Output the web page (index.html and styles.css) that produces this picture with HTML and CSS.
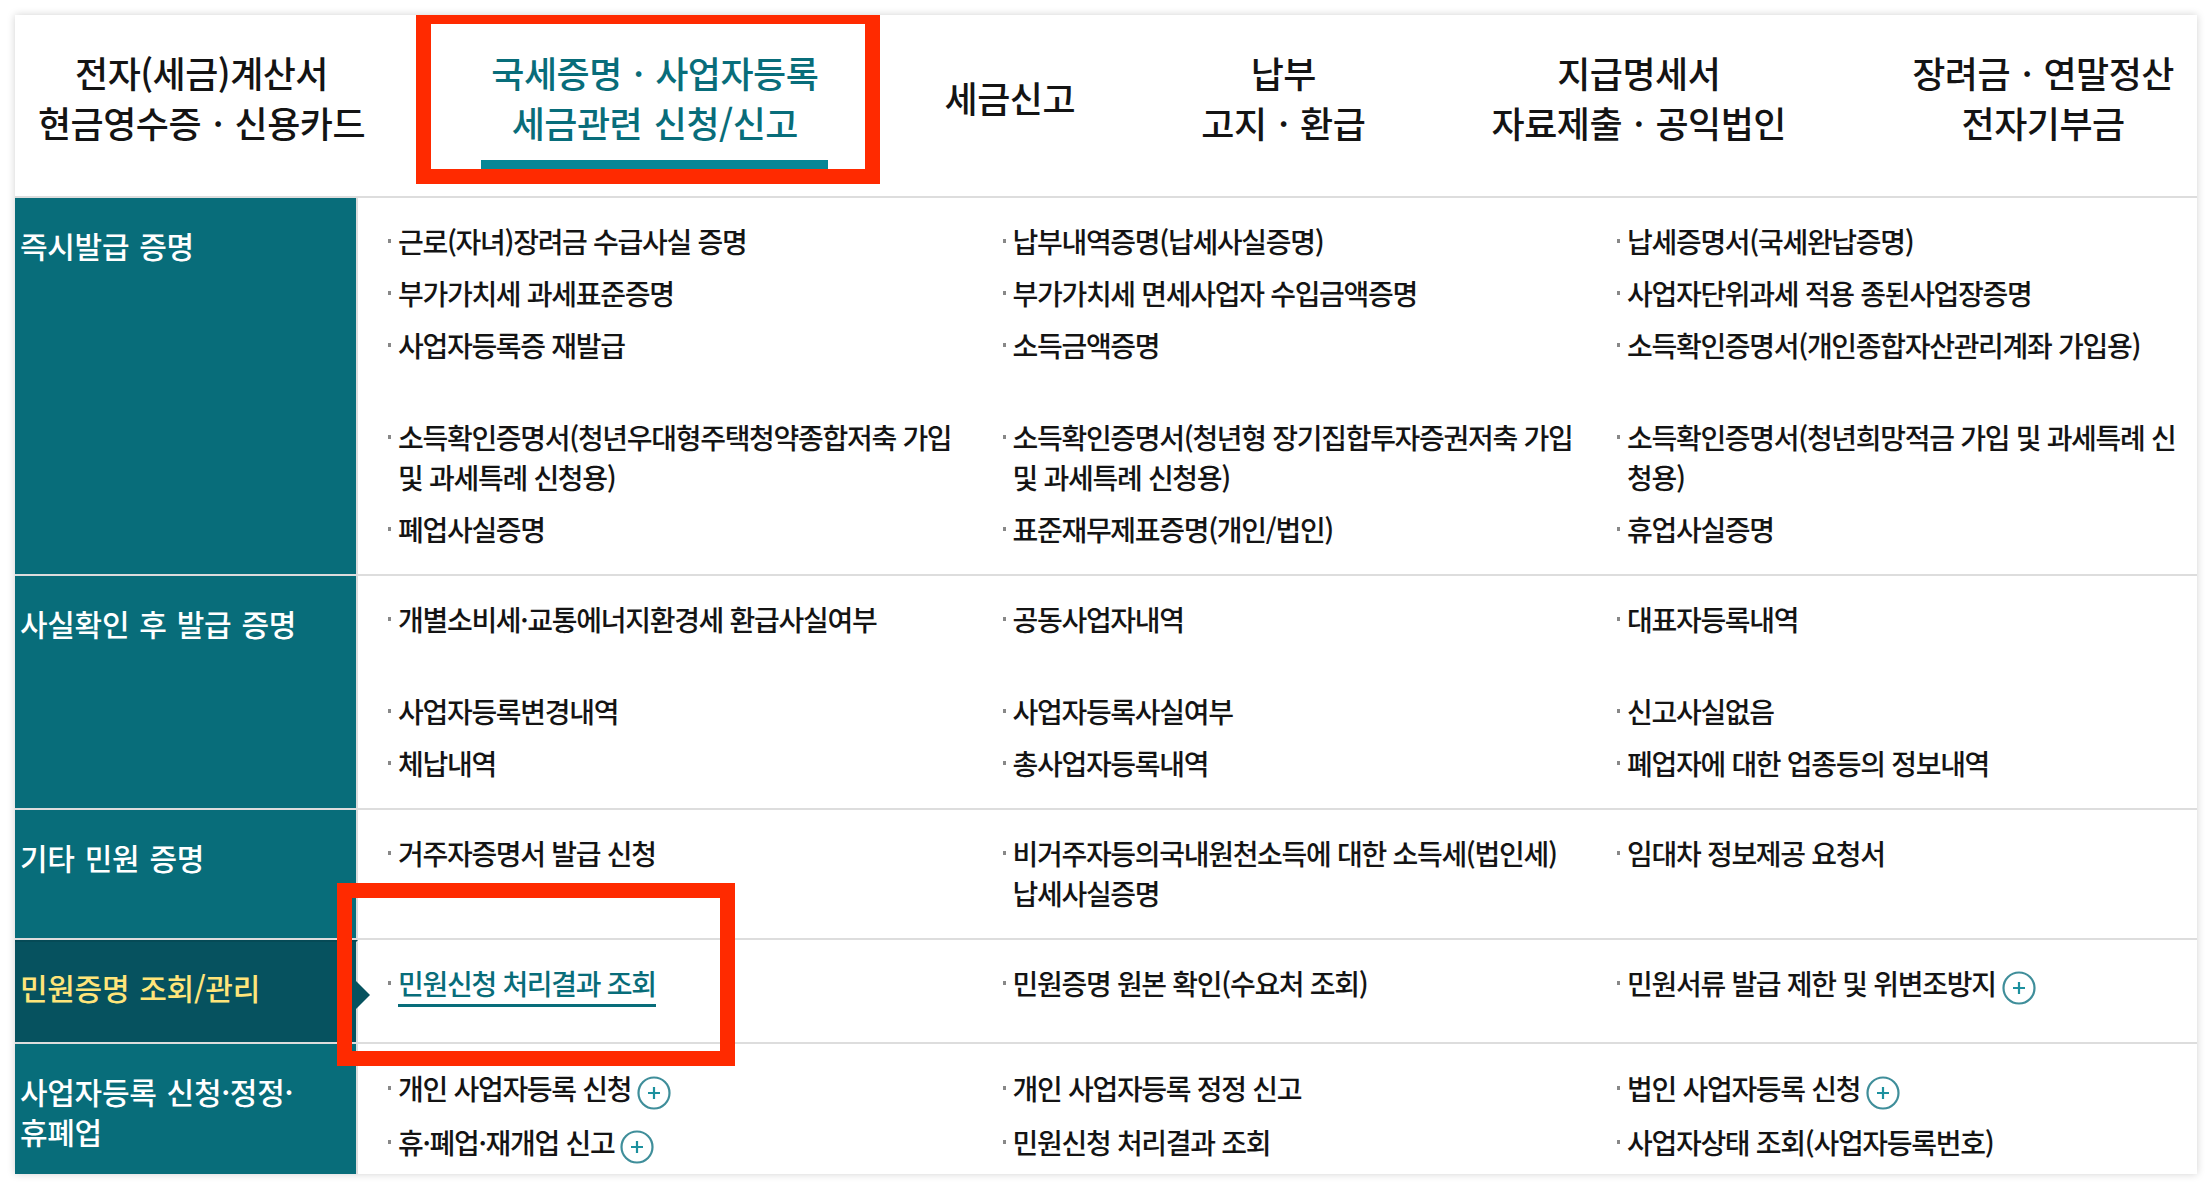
FILE: index.html
```html
<!DOCTYPE html>
<html lang="ko">
<head>
<meta charset="utf-8">
<title>국세증명 · 사업자등록</title>
<link rel="stylesheet" href="styles.css">
</head>
<body>
<main class="panel">
  <nav class="tabs">
    <a class="tab">전자(세금)계산서<br>현금영수증 · 신용카드</a>
    <a class="tab tab-active">국세증명 · 사업자등록<br>세금관련 신청/신고</a>
    <a class="tab">세금신고</a>
    <a class="tab">납부<br>고지 · 환급</a>
    <a class="tab">지급명세서<br>자료제출 · 공익법인</a>
    <a class="tab">장려금 · 연말정산<br>전자기부금</a>
  </nav>

  <section class="row row-first">
    <h3 class="label">즉시발급 증명</h3>
    <div class="cell">
      <ul class="items">
        <li>근로(자녀)장려금 수급사실 증명</li>
        <li>납부내역증명(납세사실증명)</li>
        <li>납세증명서(국세완납증명)</li>
        <li>부가가치세 과세표준증명</li>
        <li>부가가치세 면세사업자 수입금액증명</li>
        <li>사업자단위과세 적용 종된사업장증명</li>
        <li>사업자등록증 재발급</li>
        <li>소득금액증명</li>
        <li>소득확인증명서(개인종합자산관리계좌 가입용)</li>
      </ul>
      <ul class="items">
        <li>소득확인증명서(청년우대형주택청약종합저축 가입 및 과세특례 신청용)</li>
        <li>소득확인증명서(청년형 장기집합투자증권저축 가입 및 과세특례 신청용)</li>
        <li>소득확인증명서(청년희망적금 가입 및 과세특례 신청용)</li>
        <li>폐업사실증명</li>
        <li>표준재무제표증명(개인/법인)</li>
        <li>휴업사실증명</li>
      </ul>
    </div>
  </section>

  <section class="row">
    <h3 class="label">사실확인 후 발급 증명</h3>
    <div class="cell">
      <ul class="items">
        <li>개별소비세·교통에너지환경세 환급사실여부</li>
        <li>공동사업자내역</li>
        <li>대표자등록내역</li>
      </ul>
      <ul class="items">
        <li>사업자등록변경내역</li>
        <li>사업자등록사실여부</li>
        <li>신고사실없음</li>
        <li>체납내역</li>
        <li>총사업자등록내역</li>
        <li>폐업자에 대한 업종등의 정보내역</li>
      </ul>
    </div>
  </section>

  <section class="row">
    <h3 class="label">기타 민원 증명</h3>
    <div class="cell">
      <ul class="items">
        <li>거주자증명서 발급 신청</li>
        <li>비거주자등의국내원천소득에 대한 소득세(법인세) 납세사실증명</li>
        <li>임대차 정보제공 요청서</li>
      </ul>
    </div>
  </section>

  <section class="row row-active">
    <h3 class="label label-active">민원증명 조회/관리</h3>
    <div class="cell cell-roomy">
      <ul class="items">
        <li><a class="link-active">민원신청 처리결과 조회</a></li>
        <li>민원증명 원본 확인(수요처 조회)</li>
        <li>민원서류 발급 제한 및 위변조방지<svg class="plus" viewBox="0 0 34 34"><circle cx="17" cy="17" r="15.5"/><path class="plus-mark" d="M17 11v12M11 17h12"/></svg></li>
      </ul>
    </div>
  </section>

  <section class="row row-last">
    <h3 class="label">사업자등록 신청·정정·<br>휴폐업</h3>
    <div class="cell cell-tight">
      <ul class="items">
        <li>개인 사업자등록 신청<svg class="plus" viewBox="0 0 34 34"><circle cx="17" cy="17" r="15.5"/><path class="plus-mark" d="M17 11v12M11 17h12"/></svg></li>
        <li>개인 사업자등록 정정 신고</li>
        <li>법인 사업자등록 신청<svg class="plus" viewBox="0 0 34 34"><circle cx="17" cy="17" r="15.5"/><path class="plus-mark" d="M17 11v12M11 17h12"/></svg></li>
        <li>휴·폐업·재개업 신고<svg class="plus" viewBox="0 0 34 34"><circle cx="17" cy="17" r="15.5"/><path class="plus-mark" d="M17 11v12M11 17h12"/></svg></li>
        <li>민원신청 처리결과 조회</li>
        <li>사업자상태 조회(사업자등록번호)</li>
      </ul>
    </div>
  </section>

  <div class="mark mark-tab"></div>
  <div class="mark mark-link"></div>
</main>
</body>
</html>
```
FILE: styles.css
```css
* { box-sizing: border-box; }
html, body { margin: 0; padding: 0; background: #fff; }
body {
  padding: 15px 15px 15px;
  font-family: "Noto Sans CJK KR", "Noto Sans", sans-serif;
  color: #141414;
}
ul, h3 { margin: 0; padding: 0; list-style: none; }

.panel {
  position: relative;
  width: 2182px;
  background: #fff;
  box-shadow: 0 0 8px rgba(0, 0, 0, .18);
}

.tabs {
  display: flex;
  justify-content: space-between;
  height: 183px;
  padding: 32px 13px 0;
  border-bottom: 2px solid #ddd;
}
.tab {
  display: flex;
  align-items: center;
  height: 100px;
  padding: 0 10px;
  text-align: center;
  font-size: 36px;
  line-height: 50px;
  font-weight: 500;
  letter-spacing: -.5px;
  word-spacing: 2px;
  position: relative;
}
.tab-active { color: #086d7a; }
.tab-active::after {
  content: "";
  position: absolute;
  left: 0;
  right: 0;
  top: 113px;
  height: 10px;
  background: #078796;
}

.row {
  display: grid;
  grid-template-columns: 343px 1fr;
  border-bottom: 2px solid #ddd;
}
.row-last { border-bottom: 0; }

.label {
  padding: 27px 5px 0;
  background: #086d7a;
  background-clip: padding-box;
  border-right: 2px solid #ddd;
  color: #fff;
  font-size: 30px;
  line-height: 40px;
  font-weight: 500;
  letter-spacing: -.3px;
  word-spacing: 2px;
}
.label-active {
  position: relative;
  background: #06525f;
  background-clip: padding-box;
  color: #ffe57a;
  border-top: 2px solid #054a56;
  padding-top: 25px;
}
.label-active::after {
  content: "";
  position: absolute;
  left: 100%;
  top: 39px;
  border-left: 14px solid #06525f;
  border-top: 14px solid transparent;
  border-bottom: 14px solid transparent;
}

.cell { padding: 23px 0 25px 30px; }
.cell-roomy { padding: 23px 0 39px 30px; }
.cell-tight { padding: 24px 0 12px 30px; }
.row-last .items { row-gap: 14px; }

.items {
  display: grid;
  grid-template-columns: repeat(3, 580px);
  column-gap: 34.5px;
  row-gap: 12px;
}
.items + .items { margin-top: 52px; }
.items li {
  position: relative;
  padding-left: 10px;
  font-size: 28px;
  line-height: 40px;
  font-weight: 500;
  letter-spacing: -1.3px;
}
.items li::before {
  content: "";
  position: absolute;
  left: 0;
  top: 18px;
  width: 3px;
  height: 4px;
  background: #888;
}

.link-active {
  color: #086d7a;
  border-bottom: 3px solid #086d7a;
  padding-bottom: 1px;
}

.plus {
  width: 34px;
  height: 34px;
  margin: -6px 0 -6px 6px;
  vertical-align: -4px;
  fill: none;
  stroke: #3f8e9a;
  stroke-width: 2.2;
}
.plus-mark { stroke: #1c909e; }

.mark { position: absolute; border-style: solid; border-color: #ff2a00; pointer-events: none; }
.mark-tab { left: 401px; top: 0; width: 464px; height: 169px; border-width: 9px 15px 15px; }
.mark-link { left: 322px; top: 868px; width: 398px; height: 183px; border-width: 15px; }
```
